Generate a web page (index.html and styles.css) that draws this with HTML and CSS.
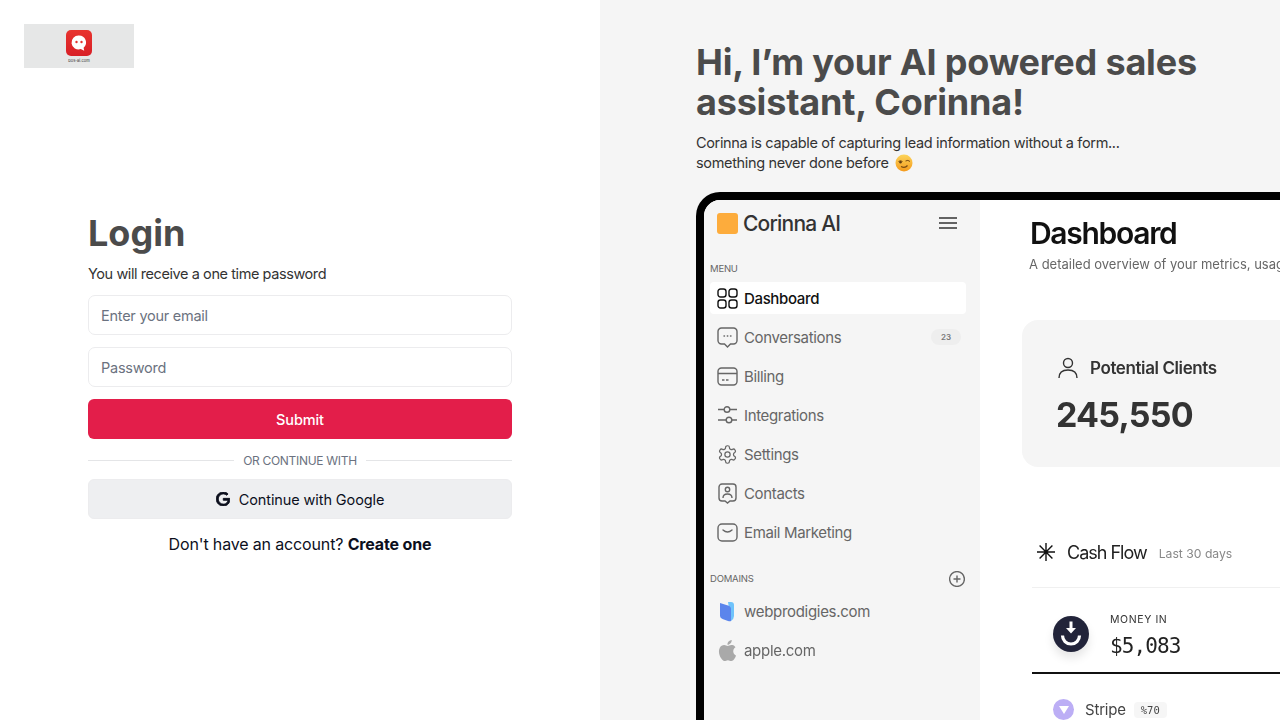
FILE: index.html
```html
<!DOCTYPE html>
<html>
<head>
  <title>Login</title>
  <meta charset="UTF-8">
  <link rel="stylesheet" href="styles.css">
</head>
<body>
  <div class="left">
    <div class="logo">
      <div class="logo-app">
        <svg viewBox="0 0 26 26" width="26" height="26">
          <path d="M13 5.500a7 7 0 0 1 4.600 12.300l.6 3-3.400-1.700A7 7 0 1 1 13 5.500z" fill="#fff"/>
          <circle cx="10.500" cy="12" r="1.200" fill="#e5322d"/>
          <circle cx="15.500" cy="12" r="1.200" fill="#e5322d"/>
        </svg>
      </div>
      <span class="logo-name">bos-ai.com</span>
    </div>

    <div class="login">
      <h1>Login</h1>
      <p class="sub">You will receive a one time password</p>
      <form class="fields">
        <input type="text" placeholder="Enter your email">
        <input type="password" placeholder="Password">
        <button type="button" class="submit">Submit</button>
        <div class="or"><span>OR CONTINUE WITH</span></div>
        <button type="button" class="google">
          <svg viewBox="0 0 24 24" width="14" height="14"><path fill="#0c0f1d" stroke="#0c0f1d" stroke-width="1.500" d="M12.480 10.920v3.280h7.840c-.24 1.840-.853 3.187-1.787 4.133-1.147 1.147-2.933 2.400-6.053 2.400-4.827 0-8.600-3.893-8.600-8.720s3.773-8.720 8.600-8.720c2.600 0 4.507 1.027 5.907 2.347l2.307-2.307C18.747 1.440 16.133 0 12.480 0 5.867 0 .307 5.387.307 12s5.560 12 12.173 12c3.573 0 6.267-1.173 8.373-3.360 2.160-2.160 2.840-5.213 2.840-7.667 0-.76-.053-1.467-.173-2.053H12.480z"/></svg>
          Continue with Google
        </button>
      </form>
      <p class="signup">Don't have an account? <b>Create one</b></p>
    </div>
  </div>

  <div class="right">
    <h2>Hi, I’m your AI powered sales assistant, Corinna!</h2>
    <p class="intro">Corinna is capable of capturing lead information without a form...<br>
      something never done before
      <svg class="wink" viewBox="0 0 18 18" width="18" height="18">
        <defs><linearGradient id="face" x1="0" y1="0" x2="0" y2="1"><stop offset="0" stop-color="#fcd45a"/><stop offset="1" stop-color="#f59a1c"/></linearGradient></defs>
        <circle cx="9" cy="9" r="8.500" fill="url(#face)"/>
        <path d="M3.500 7.500q2-1.500 4 0M10.500 7q2.500-1.500 4.500.5" fill="none" stroke="#7a4a12" stroke-width="1"/>
        <circle cx="5.500" cy="8.200" r="1.200" fill="#5c3a12"/>
        <path d="M6 12.500q4 2 6.500-1" fill="none" stroke="#7a4a12" stroke-width="1.200"/>
      </svg>
    </p>

    <div class="device">
      <div class="side">
        <div class="brand">
          <span class="brand-mark"></span>
          <span class="brand-name">Corinna AI</span>
          <svg class="burger" viewBox="0 0 18 12" width="18" height="12"><path d="M0 1h18M0 6h18M0 11h18" stroke="#333" stroke-width="1.400"/></svg>
        </div>

        <div class="side-label">MENU</div>
        <div class="nav">
          <div class="nav-item active">
            <svg viewBox="0 0 21 21" width="21" height="21"><rect x="1" y="1" width="8" height="8" rx="2.500"/><rect x="12" y="1" width="8" height="8" rx="2.500"/><rect x="1" y="12" width="8" height="8" rx="2.500"/><rect x="12" y="12" width="8" height="8" rx="2.500"/></svg>
            Dashboard
          </div>
          <div class="nav-item">
            <svg viewBox="0 0 21 21" width="21" height="21"><path d="M4.500 1h12A3.500 3.500 0 0 1 20 4.500v9a3.500 3.500 0 0 1-3.500 3.500h-3l-3 3-3-3h-3A3.500 3.500 0 0 1 1 13.500v-9A3.500 3.500 0 0 1 4.500 1z"/><path d="M7 9h.5M10.300 9h.5M13.500 9h.5" stroke-linecap="round"/></svg>
            Conversations
            <span class="count">23</span>
          </div>
          <div class="nav-item">
            <svg viewBox="0 0 21 21" width="21" height="21"><rect x="1" y="2" width="19" height="17" rx="3.500"/><path d="M1 7.500h19M5 14h2.500M9 14h2.500"/></svg>
            Billing
          </div>
          <div class="nav-item">
            <svg viewBox="0 0 21 21" width="21" height="21"><circle cx="10" cy="4.500" r="2.800"/><circle cx="12" cy="15" r="2.800"/><path d="M1 4.500h6M13 4.500h7M1 15h8M15 15h5"/></svg>
            Integrations
          </div>
          <div class="nav-item">
            <svg viewBox="0 0 24 24" width="21" height="21"><path d="M12.220 2h-.44a2 2 0 0 0-2 2v.18a2 2 0 0 1-1 1.730l-.43.25a2 2 0 0 1-2 0l-.15-.08a2 2 0 0 0-2.730.73l-.22.38a2 2 0 0 0 .73 2.730l.15.1a2 2 0 0 1 1 1.720v.51a2 2 0 0 1-1 1.740l-.15.09a2 2 0 0 0-.73 2.730l.22.38a2 2 0 0 0 2.730.73l.15-.08a2 2 0 0 1 2 0l.43.25a2 2 0 0 1 1 1.730V20a2 2 0 0 0 2 2h.44a2 2 0 0 0 2-2v-.18a2 2 0 0 1 1-1.730l.43-.25a2 2 0 0 1 2 0l.15.08a2 2 0 0 0 2.730-.73l.22-.39a2 2 0 0 0-.73-2.730l-.15-.08a2 2 0 0 1-1-1.740v-.5a2 2 0 0 1 1-1.740l.15-.09a2 2 0 0 0 .73-2.730l-.22-.38a2 2 0 0 0-2.730-.73l-.15.08a2 2 0 0 1-2 0l-.43-.25a2 2 0 0 1-1-1.730V4a2 2 0 0 0-2-2z"/><circle cx="12" cy="12" r="3"/></svg>
            Settings
          </div>
          <div class="nav-item">
            <svg viewBox="0 0 21 21" width="21" height="21"><path d="M5 1h11a3 3 0 0 1 3 3v11a3 3 0 0 1-3 3h-3l-2.500 2-2.500-2H5a3 3 0 0 1-3-3V4a3 3 0 0 1 3-3z"/><circle cx="10.500" cy="6.500" r="2.200"/><path d="M6 15q0-4 4.500-4t4.500 4"/></svg>
            Contacts
          </div>
          <div class="nav-item">
            <svg viewBox="0 0 21 21" width="21" height="21"><rect x="1" y="2" width="19" height="17" rx="4"/><path d="M6 8q4.500 4 9 0" stroke-linecap="round"/></svg>
            Email Marketing
          </div>
        </div>

        <div class="side-label domains">
          DOMAINS
          <svg viewBox="0 0 16 16" width="16" height="16"><circle cx="8" cy="8" r="7.400"/><path d="M8 4.500v7M4.500 8h7"/></svg>
        </div>
        <div class="domain">
          <svg viewBox="0 0 21 21" width="21" height="21">
            <path d="M11 1h3a3 3 0 0 1 3 3v11q0 3-3 5z" fill="#6fc3fb"/>
            <path d="M3 2l8 2.500q3 1 3 3.500v12q-1 .5-3 0l-5.500-2Q3 17 3 15z" fill="#5b85ec"/>
          </svg>
          webprodigies.com
        </div>
        <div class="domain">
          <svg viewBox="0 0 24 24" width="21" height="21"><path fill="#a9a9a9" d="M12.152 6.896c-.948 0-2.415-1.078-3.960-1.040-2.040.027-3.910 1.183-4.961 3.014-2.117 3.675-.546 9.103 1.519 12.090 1.013 1.454 2.208 3.090 3.792 3.039 1.520-.065 2.090-.987 3.935-.987 1.831 0 2.350.987 3.960.948 1.637-.026 2.676-1.480 3.676-2.948 1.156-1.688 1.636-3.325 1.662-3.415-.039-.013-3.182-1.221-3.220-4.857-.026-3.040 2.480-4.494 2.597-4.559-1.429-2.090-3.623-2.324-4.390-2.376-2-.156-3.675 1.090-4.610 1.090zM15.530 3.830c.843-1.012 1.400-2.427 1.245-3.830-1.207.052-2.662.805-3.532 1.818-.78.896-1.454 2.338-1.273 3.714 1.338.104 2.715-.688 3.559-1.701"/></svg>
          apple.com
        </div>
      </div>

      <div class="main">
        <div class="main-title">Dashboard</div>
        <div class="main-sub">A detailed overview of your metrics, usage, customers and more</div>

        <div class="stat">
          <div class="stat-head">
            <svg viewBox="0 0 20 22" width="20" height="22"><circle cx="10" cy="6" r="4.500"/><path d="M1 21q0-8 9-8t9 8"/></svg>
            Potential Clients
          </div>
          <div class="stat-value">245,550</div>
        </div>

        <div class="cash">
          <div class="cash-head">
            <svg viewBox="0 0 18 18" width="18" height="18"><path d="M9 0v18M0 9h18M2.600 2.600l12.800 12.800M15.400 2.600L2.600 15.400"/></svg>
            <span class="cash-title">Cash Flow</span>
            <span class="cash-range">Last 30 days</span>
          </div>
          <div class="money">
            <div class="money-icon">
              <svg viewBox="0 0 36 36" width="36" height="36"><path class="arrow" d="M16.500 5.500h3V12H23l-5 5.500-5-5.500h3.500z"/><path d="M9.500 19.500a8.500 8.500 0 0 0 17 0" stroke-width="3.200"/></svg>
            </div>
            <div class="money-text">
              <div class="money-label">MONEY IN</div>
              <div class="money-value">$5,083</div>
            </div>
          </div>
          <div class="source">
            <div class="source-icon"></div>
            <span class="source-name">Stripe</span>
            <span class="source-pct">%70</span>
          </div>
        </div>
      </div>
    </div>
  </div>
</body>
</html>
```

FILE: styles.css
```css
html, body {
  height: 100%;
}
body {
  margin: 0;
  display: flex;
  height: 720px;
  overflow: hidden;
  background-color: #fff;
  font-family: Inter, "Noto Sans", Arial, sans-serif;
  color: #111;
}

/* left column */
.left {
  width: 600px;
  flex: none;
  box-sizing: border-box;
  padding: 24px 88px 0 24px;
}
.logo {
  width: 110px;
  height: 44px;
  background-color: #e6e7e7;
  display: flex;
  flex-direction: column;
  align-items: center;
  padding-top: 6px;
  box-sizing: border-box;
}
.logo-app {
  width: 26px;
  height: 26px;
  border-radius: 5px;
  background: linear-gradient(#e8342f, #d81f26);
}
.logo-app svg {
  display: block;
}
.logo-name {
  font-size: 4px;
  line-height: 6px;
  margin-top: 2px;
  color: #333;
}
.login {
  margin: 145px 0 0 64px;
}
h1 {
  margin: 0;
  font-size: 36px;
  line-height: 40px;
  font-weight: 700;
  color: #4b4b4b;
}
.sub {
  margin: 11px 0 11px;
  font-size: 14.500px;
  line-height: 20px;
  letter-spacing: -0.42px;
  color: #333;
}
.fields {
  display: flex;
  flex-direction: column;
  gap: 12px;
}
input {
  height: 40px;
  box-sizing: border-box;
  padding: 0 12px;
  border: 1px solid #ececee;
  border-radius: 7px;
  background: #fff;
  font-family: inherit;
  font-size: 14.500px;
  letter-spacing: -0.25px;
}
input::placeholder {
  color: #6b7280;
  opacity: 1;
}
button {
  height: 40px;
  border: none;
  border-radius: 6px;
  font-family: inherit;
  font-size: 14.500px;
  letter-spacing: -0.1px;
  cursor: pointer;
}
.submit {
  background-color: #e31e4a;
  color: #fff;
  font-weight: 500;
}
.or {
  display: flex;
  align-items: center;
  gap: 9px;
  height: 16px;
  margin: 1px 0 -1px;
  font-size: 12px;
  letter-spacing: -0.3px;
  color: #6b7280;
}
.or::before, .or::after {
  content: "";
  flex: 1;
  height: 1px;
  background-color: #e4e5e7;
}
.google {
  display: flex;
  align-items: center;
  justify-content: center;
  gap: 9px;
  background-color: #eeeff1;
  border: 1px solid #ececee;
  color: #0c0f1d;
}
.signup {
  margin: 14px 0 0;
  text-align: center;
  font-size: 16px;
  line-height: 22px;
  letter-spacing: -0.15px;
  color: #0c0f1d;
}

/* right column */
.right {
  flex: 1;
  min-width: 0;
  overflow: hidden;
  box-sizing: border-box;
  padding: 42px 0 0 96px;
  background-color: #f5f5f5;
}
h2 {
  margin: 0;
  width: 540px;
  font-size: 36px;
  line-height: 40px;
  font-weight: 700;
  letter-spacing: -0.2px;
  color: #4b4b4b;
}
.intro {
  margin: 11px 0 19px;
  font-size: 14.500px;
  line-height: 20px;
  letter-spacing: -0.34px;
  color: #333;
}
.wink {
  margin-left: 3px;
  vertical-align: -4px;
}

/* dashboard mock */
.device {
  display: flex;
  width: 900px;
  height: 640px;
  box-sizing: border-box;
  border: 8px solid #000;
  border-right: none;
  border-radius: 24px 0 0 0;
  background-color: #fff;
  filter: blur(0.5px);
}
.device svg {
  fill: none;
  stroke: currentColor;
  stroke-width: 1.400;
  flex: none;
}
.side {
  width: 276px;
  flex: none;
  box-sizing: border-box;
  padding-top: 11px;
  background-color: #f5f5f5;
  border-radius: 16px 0 0 0;
}
.brand {
  display: flex;
  align-items: center;
  height: 24px;
  padding: 0 23px 0 13px;
  gap: 5px;
}
.brand-mark {
  width: 21px;
  height: 21px;
  border-radius: 3px;
  background-color: #fdac3c;
}
.brand-name {
  flex: 1;
  font-size: 21px;
  font-weight: 500;
  letter-spacing: -0.8px;
  color: #333;
}
.side-label {
  margin: 28px 0 0 6px;
  font-size: 9.500px;
  line-height: 12px;
  letter-spacing: -0.2px;
  color: #666;
}
.nav {
  display: flex;
  flex-direction: column;
  gap: 7px;
  margin-top: 7px;
}
.nav-item {
  display: flex;
  align-items: center;
  gap: 6px;
  height: 32px;
  width: 256px;
  margin-left: 6px;
  box-sizing: border-box;
  padding: 0 5px 0 7px;
  border-radius: 4px;
  font-size: 15px;
  letter-spacing: -0.35px;
  color: #666;
}
.nav-item.active {
  background-color: #fff;
  color: #111;
  font-weight: 500;
}
.count {
  margin-left: auto;
  width: 30px;
  height: 16px;
  border-radius: 8px;
  background-color: #eee;
  font-size: 8px;
  line-height: 16px;
  text-align: center;
  font-weight: 600;
  letter-spacing: 0;
  color: #777;
}
.side-label.domains {
  display: flex;
  align-items: center;
  justify-content: space-between;
  height: 16px;
  line-height: 16px;
  margin: 23px 15px 0 6px;
}
.domain {
  display: flex;
  align-items: center;
  gap: 6px;
  height: 32px;
  margin: 7px 0 0 13px;
  font-size: 15px;
  letter-spacing: -0.3px;
  color: #666;
}
.side-label.domains + .domain {
  margin-top: 8px;
}
.domain svg {
  stroke: none;
}

.main {
  flex: 1;
  padding: 15px 0 0 42px;
  min-width: 0;
}
.main-title {
  margin-left: 8px;
  font-size: 30px;
  line-height: 36px;
  font-weight: 600;
  letter-spacing: -1.3px;
  color: #111;
}
.main-sub {
  margin: 4px 0 0 7px;
  font-size: 13px;
  line-height: 18px;
  white-space: nowrap;
  color: #666;
}
.stat {
  height: 147px;
  margin-top: 47px;
  box-sizing: border-box;
  padding: 36px 0 0 34px;
  border-radius: 16px;
  background-color: #f5f5f5;
}
.stat-head {
  display: flex;
  align-items: center;
  gap: 12px;
  margin: 0 0 13px 2px;
  font-size: 17px;
  line-height: 24px;
  font-weight: 600;
  letter-spacing: -0.4px;
  color: #333;
}
.stat-value {
  font-size: 34px;
  line-height: 44px;
  font-weight: 700;
  letter-spacing: -0.8px;
  color: #333;
}
.cash {
  margin: 67px 0 0 10px;
}
.cash-head {
  display: flex;
  align-items: center;
  gap: 12px;
  height: 36px;
  padding: 0 0 17px 5px;
  border-bottom: 1px solid #f0f0f0;
}
.cash-title {
  font-size: 18px;
  letter-spacing: -1px;
  color: #222;
}
.cash-range {
  padding-top: 3px;
  font-size: 12.200px;
  color: #888;
}
.money {
  display: flex;
  align-items: center;
  gap: 21px;
  height: 86px;
  box-sizing: border-box;
  padding: 8px 0 0 21px;
  border-bottom: 2px solid #111;
}
.money-icon {
  width: 36px;
  height: 36px;
  border-radius: 50%;
  background-color: #22243a;
  color: #fff;
  box-shadow: 0 6px 10px rgba(0, 0, 0, 0.1);
}
.money-icon svg {
  display: block;
}
.device .money-icon .arrow {
  fill: #fff;
  stroke: none;
}
.money-text {
  padding-top: 4px;
}
.money-label {
  font-size: 10.500px;
  line-height: 14px;
  letter-spacing: 0.6px;
  color: #333;
}
.money-value {
  margin-top: 5px;
  font-family: "DejaVu Sans Mono", monospace;
  font-size: 21px;
  line-height: 28px;
  letter-spacing: -0.9px;
  color: #222;
}
.source {
  display: flex;
  align-items: center;
  gap: 11px;
  padding: 25px 0 0 21px;
}
.source-icon {
  position: relative;
  width: 21px;
  height: 21px;
  border-radius: 50%;
  background-color: #bcaef5;
}
.source-icon::after {
  content: "";
  position: absolute;
  left: 6px;
  top: 7px;
  border-left: 5px solid transparent;
  border-right: 5px solid transparent;
  border-top: 8px solid #fff;
}
.source-name {
  font-size: 15px;
  letter-spacing: -0.2px;
  color: #444;
}
.source-pct {
  margin-left: -3px;
  padding: 2px 7px;
  border-radius: 4px;
  background-color: #f6f6f6;
  font-family: "DejaVu Sans Mono", monospace;
  font-size: 10.500px;
  color: #444;
}
```
